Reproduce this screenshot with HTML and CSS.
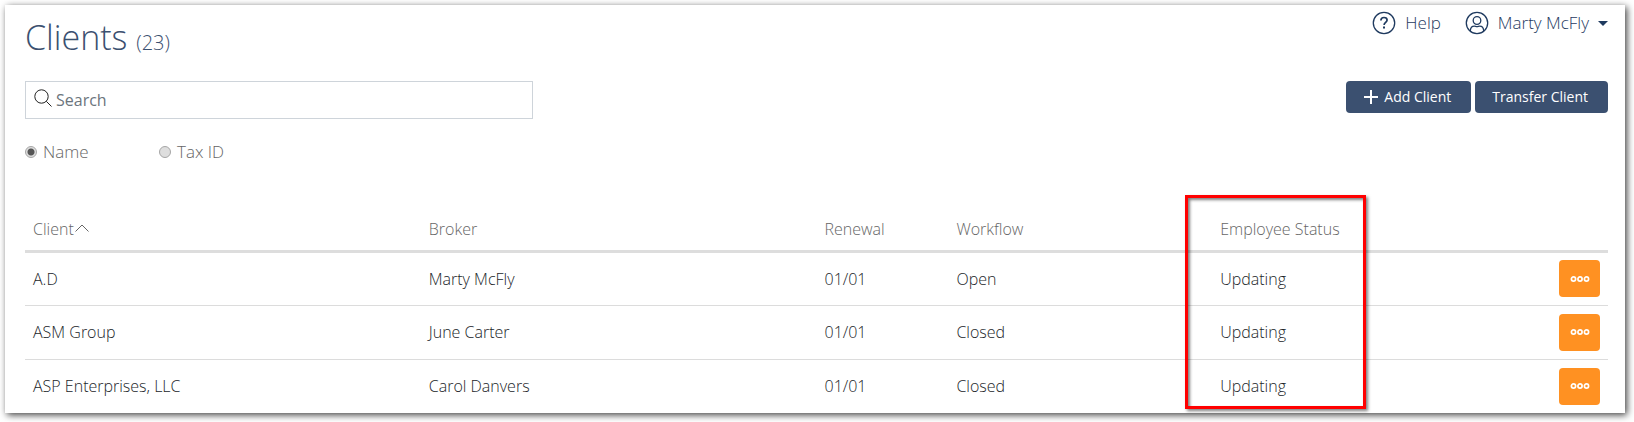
FILE: index.html
```html
<!DOCTYPE html>
<html lang="en">
<head>
<meta charset="utf-8">
<title>Clients</title>
<link rel="stylesheet" href="styles.css">
</head>
<body>
<svg class="sprite" aria-hidden="true">
  <symbol id="dots" viewBox="0 0 20 8">
    <g fill="none" stroke="currentColor" stroke-width="1.7"><circle cx="3.5" cy="4" r="2.1"/><circle cx="10" cy="4" r="2.1"/><circle cx="16.500" cy="4" r="2.1"/></g>
  </symbol>
</svg>
<main class="panel">
  <header class="top">
    <h1 class="title">Clients <span class="count">(23)</span></h1>
    <nav class="nav">
      <a class="nav-link" href="#help">
        <svg class="nav-icon" viewBox="0 0 24 24" fill="none" stroke="currentColor" stroke-width="1.3"><circle cx="12" cy="12" r="10.700"/><path d="M8.900 9.500c0-1.900 1.300-3 3.100-3s3.100 1 3.100 2.600c0 2.300-3 2.400-3 5" stroke-width="1.700"/><path d="M12 15.600v2" stroke-width="2"/></svg>
        Help
      </a>
      <a class="nav-link" href="#account">
        <svg class="nav-icon" viewBox="0 0 24 24" fill="none" stroke="currentColor" stroke-width="1.3"><circle cx="12" cy="12" r="10.700"/><circle cx="12" cy="9.500" r="3.800"/><path d="M5.300 20c.2-3.200 1.800-4.800 4-4.800 1 0 1.700.5 2.700.5s1.700-.5 2.700-.5c2.200 0 3.800 1.600 4 4.800"/></svg>
        Marty McFly
        <span class="caret"></span>
      </a>
    </nav>
  </header>
  <div class="tools">
    <label class="search">
      <svg class="search-icon" viewBox="0 0 18 18" fill="none" stroke="currentColor"><circle cx="7.500" cy="7.500" r="6.700"/><path d="M12.300 12.300L17.500 17.500"/></svg>
      <input class="search-input" type="text" placeholder="Search" aria-label="Search">
    </label>
    <div class="actions">
      <button class="btn" type="button"><svg class="plus" viewBox="0 0 16 16" stroke="currentColor" stroke-width="2"><path d="M8 1v14M1 8h14"/></svg>Add Client</button>
      <button class="btn" type="button">Transfer Client</button>
    </div>
  </div>
  <div class="filters">
    <label class="filter"><input class="radio" type="radio" name="by" checked>Name</label>
    <label class="filter"><input class="radio" type="radio" name="by">Tax ID</label>
  </div>
  <div class="list">
    <table class="table">
      <colgroup><col class="c3"><col class="c3"><col class="c1"><col class="c2"><col class="c2"><col class="c1"></colgroup>
      <thead>
        <tr><th>Client<svg class="sort" viewBox="0 0 14 8" fill="none" stroke="currentColor"><path d="M.5 7.500L7 1l6.500 6.500"/></svg></th><th>Broker</th><th>Renewal</th><th>Workflow</th><th>Employee Status</th><th></th></tr>
      </thead>
      <tbody>
        <tr><td>A.D</td><td>Marty McFly</td><td>01/01</td><td>Open</td><td>Updating</td><td class="end"><button class="more" type="button" aria-label="More"><svg class="dots"><use href="#dots"/></svg></button></td></tr>
        <tr><td>ASM Group</td><td>June Carter</td><td>01/01</td><td>Closed</td><td>Updating</td><td class="end"><button class="more" type="button" aria-label="More"><svg class="dots"><use href="#dots"/></svg></button></td></tr>
        <tr><td>ASP Enterprises, LLC</td><td>Carol Danvers</td><td>01/01</td><td>Closed</td><td>Updating</td><td class="end"><button class="more" type="button" aria-label="More"><svg class="dots"><use href="#dots"/></svg></button></td></tr>
      </tbody>
    </table>
    <div class="highlight"></div>
  </div>
</main>
</body>
</html>
```
FILE: styles.css
```css
* { box-sizing: border-box; }
body {
  margin: 0;
  padding: 5px 9px 9px 5px;
  background: #fff;
  color: #212529;
  font: 300 16px/24px "Open Sans", "Noto Sans", sans-serif;
}
.sprite { position: absolute; width: 0; height: 0; }
.panel {
  padding: 0 17px 0 20px;
  background: #fff;
  box-shadow: 2px 2px 7px rgba(0, 0, 0, 0.75);
}
.top { display: flex; justify-content: space-between; align-items: flex-start; }
.title {
  margin: 0;
  padding-top: 8px;
  color: #3b5070;
  font-size: 34px;
  font-weight: 300;
  line-height: 48px;
}
.count { font-size: 20px; }
.nav { display: flex; gap: 24px; padding-top: 6px; }
.nav-link {
  display: flex;
  align-items: center;
  gap: 9px;
  color: #1f3a5f;
  font-size: 17px;
  text-decoration: none;
}
.nav-icon { width: 24px; height: 24px; }
.caret {
  border: 5px solid transparent;
  border-top-color: currentColor;
  border-bottom: 0;
}
.tools {
  display: flex;
  justify-content: space-between;
  align-items: flex-start;
  margin-top: 14px;
}
.search {
  display: flex;
  align-items: center;
  gap: 4px;
  width: 508px;
  height: 38px;
  padding: 0 8px;
  border: 1px solid #ced4da;
}
.search-icon { width: 18px; height: 18px; margin-bottom: 5px; color: #222; }
.search-input {
  flex: 1;
  min-width: 0;
  padding: 0;
  border: 0;
  outline: 0;
  background: transparent;
  font: 400 16px/24px "Open Sans", "Noto Sans", sans-serif;
}
.search-input::placeholder { color: #6c757d; opacity: 1; }
.actions { display: flex; gap: 4px; }
.btn {
  display: flex;
  align-items: center;
  gap: 5px;
  height: 32px;
  padding: 0 20px 0 17px;
  border: 0;
  border-radius: 4px;
  background: #3b5070;
  color: #fff;
  font: 400 14px/20px "Open Sans", "Noto Sans", sans-serif;
}
.plus { width: 16px; height: 16px; }
.filters { display: flex; margin-top: 21px; color: #666; font-size: 17px; }
.filter { display: flex; align-items: center; gap: 6px; width: 134px; }
.radio {
  appearance: none;
  width: 12px;
  height: 12px;
  margin: 0;
  border: 1px solid #a6a6a6;
  border-radius: 50%;
  background: #dedede;
}
.radio:checked { background: radial-gradient(circle, #555 0 3px, #dedede 4px); }
.list { position: relative; margin-top: 44px; }
.table { width: 100%; table-layout: fixed; border-collapse: collapse; }
.c3 { width: 25%; }
.c2 { width: 16.667%; }
.c1 { width: 8.333%; }
.table th {
  height: 43px;
  padding: 0 8px;
  border-bottom: 3px solid #ddd;
  color: #666;
  font-weight: 300;
  text-align: left;
}
.table td { height: 54px; padding: 0 8px; border-bottom: 1px solid #dcdcdc; }
.table tr:last-child td { border-bottom: 0; }
.sort { width: 14px; height: 8px; margin: 0 0 3px 1px; }
.table .end { text-align: right; }
.more {
  display: inline-flex;
  align-items: center;
  justify-content: center;
  width: 41px;
  height: 37px;
  padding: 0;
  border: 0;
  border-radius: 4px;
  background: #ff9122;
  color: #fff;
  vertical-align: middle;
}
.dots { width: 20px; height: 8px; }
.highlight {
  position: absolute;
  top: -13px;
  bottom: 4px;
  left: 75%;
  width: 181px;
  margin-left: -27px;
  border: 3px solid #f00;
  box-shadow: 2px 2px 3px rgba(0, 0, 0, 0.5), inset 2px 2px 3px rgba(0, 0, 0, 0.5);
  pointer-events: none;
}
```
